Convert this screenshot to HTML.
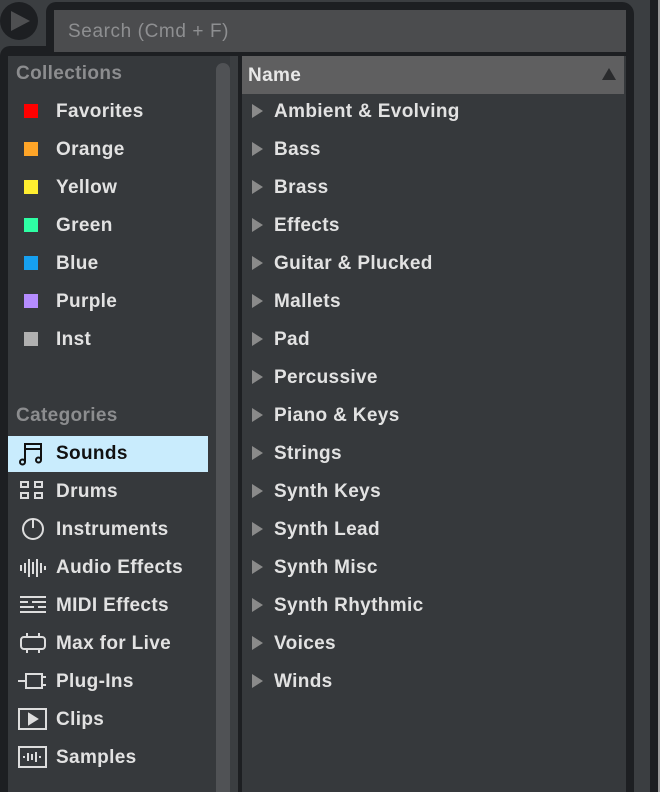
<!DOCTYPE html>
<html><head><style>
*{margin:0;padding:0;box-sizing:border-box}
body{width:660px;height:792px;background:#3b3e41;position:relative;overflow:hidden;font-family:"Liberation Sans",sans-serif;font-weight:bold;font-size:19px;letter-spacing:0.35px;color:#e2e2e2}
.a{position:absolute}
.t{position:absolute;line-height:22px;white-space:nowrap}
.sq{position:absolute;width:14px;height:14px;left:24px}
.tri{position:absolute;left:252px;width:0;height:0;border-left:11px solid #8a8a8a;border-top:7px solid transparent;border-bottom:7px solid transparent}
svg{position:absolute}
</style></head><body>
<div class="a" style="left:46px;top:2px;width:588px;height:60px;background:#1d1f22;border-radius:10px 12px 0 0"></div>
<div class="a" style="left:0;top:46px;width:634px;height:746px;background:#1d1f22;border-radius:10px 0 0 0"></div>
<div class="a" style="left:54px;top:10px;width:572px;height:42px;background:#4b4c4e"></div>
<div class="t" style="left:68px;top:21px;color:#8e8f91;font-weight:normal;font-size:19px;letter-spacing:0.6px">Search (Cmd + F)</div>
<div class="a" style="left:0;top:2px;width:38px;height:38px;border-radius:50%;background:#1d1f22"></div>
<div class="a" style="left:11px;top:11px;width:0;height:0;border-left:19px solid #4e4f51;border-top:10px solid transparent;border-bottom:10px solid transparent"></div>
<div class="a" style="left:8px;top:56px;width:230px;height:736px;background:#36393c"></div>
<div class="a" style="left:216px;top:63px;width:14px;height:729px;background:#505255;border-radius:7px 7px 0 0"></div>
<div class="a" style="left:230px;top:56px;width:8px;height:736px;background:#3b3e41"></div>
<div class="a" style="left:242px;top:56px;width:384px;height:736px;background:#36393c"></div>
<div class="a" style="left:242px;top:56px;width:382px;height:38px;background:#5f5f60"></div>
<div class="t" style="left:248px;top:65px;color:#e8e8e8">Name</div>
<div class="a" style="left:602px;top:68px;width:0;height:0;border-bottom:12px solid #2a2b2d;border-left:7px solid transparent;border-right:7px solid transparent"></div>
<div class="a" style="left:634px;top:0;width:16px;height:792px;background:#3b3e41"></div>
<div class="a" style="left:650px;top:0;width:8px;height:792px;background:#1d1f22"></div>
<div class="a" style="left:658px;top:0;width:2px;height:792px;background:#9a9a9a"></div>

<div class="t" style="left:16px;top:63px;color:#8c8d8f">Collections</div>
<div class="sq" style="top:104px;background:#ff0000"></div><div class="t" style="left:56px;top:101px">Favorites</div>
<div class="sq" style="top:142px;background:#ffa528"></div><div class="t" style="left:56px;top:139px">Orange</div>
<div class="sq" style="top:180px;background:#ffee30"></div><div class="t" style="left:56px;top:177px">Yellow</div>
<div class="sq" style="top:218px;background:#2effa4"></div><div class="t" style="left:56px;top:215px">Green</div>
<div class="sq" style="top:256px;background:#16a0f0"></div><div class="t" style="left:56px;top:253px">Blue</div>
<div class="sq" style="top:294px;background:#b58cff"></div><div class="t" style="left:56px;top:291px">Purple</div>
<div class="sq" style="top:332px;background:#b0b0b0"></div><div class="t" style="left:56px;top:329px">Inst</div>
<div class="t" style="left:16px;top:405px;color:#8c8d8f">Categories</div>

<div class="a" style="left:8px;top:436px;width:200px;height:36px;background:#c9ecfd"></div>
<svg style="left:18px;top:441px" width="28" height="26" viewBox="0 0 28 26" fill="none" stroke="#111" stroke-width="2"><path d="M7 21V3h16v16M7 8h16"/><circle cx="4.5" cy="21" r="2.5"/><circle cx="20.5" cy="19" r="2.5"/></svg>
<div class="t" style="left:56px;top:443px;color:#111">Sounds</div>

<svg style="left:18px;top:479px" width="30" height="26" viewBox="0 0 30 26" fill="none" stroke="#ddd" stroke-width="2"><rect x="3" y="3" width="7" height="5"/><rect x="17" y="3" width="7" height="5"/><rect x="3" y="14" width="7" height="5"/><rect x="17" y="14" width="7" height="5"/></svg>
<div class="t" style="left:56px;top:481px">Drums</div>
<svg style="left:18px;top:517px" width="30" height="26" viewBox="0 0 30 26" fill="none" stroke="#ddd" stroke-width="2"><circle cx="15" cy="12" r="10"/><path d="M15 2v9"/></svg>
<div class="t" style="left:56px;top:519px">Instruments</div>
<svg style="left:18px;top:555px" width="30" height="26" viewBox="0 0 30 26" fill="none" stroke="#ddd" stroke-width="2"><path d="M3 10v6M7 8v10M11 4v18M15 7v12M19 4v18M23 8v10M27 11v4"/></svg>
<div class="t" style="left:56px;top:557px">Audio Effects</div>
<svg style="left:18px;top:593px" width="30" height="26" viewBox="0 0 30 26" fill="none" stroke="#ddd" stroke-width="2"><path d="M2 4h26M2 9h8M14 9h14M2 14h14M20 14h8M2 19h26"/></svg>
<div class="t" style="left:56px;top:595px">MIDI Effects</div>
<svg style="left:18px;top:631px" width="30" height="26" viewBox="0 0 30 26" fill="none" stroke="#ddd" stroke-width="2"><rect x="3" y="6" width="24" height="12" rx="3"/><path d="M9 2v4M21 2v4M9 18v4M21 18v4"/></svg>
<div class="t" style="left:56px;top:633px">Max for Live</div>
<svg style="left:16px;top:669px" width="32" height="26" viewBox="0 0 32 26" fill="none" stroke="#ddd" stroke-width="2"><path d="M2 12h8M10 5h16v14H10zM26 8h4M26 16h4"/></svg>
<div class="t" style="left:56px;top:671px">Plug-Ins</div>
<svg style="left:16px;top:707px" width="32" height="26" viewBox="0 0 32 26" fill="none" stroke="#ddd" stroke-width="2"><rect x="3" y="2" width="27" height="20"/><path d="M13 7l8 5-8 5z" fill="#ddd"/></svg>
<div class="t" style="left:56px;top:709px">Clips</div>
<svg style="left:16px;top:745px" width="32" height="26" viewBox="0 0 32 26" fill="none" stroke="#ddd" stroke-width="2"><rect x="3" y="2" width="27" height="20"/><path d="M8 11v2M12 8v8M16 9v6M20 7v10M24 11v2"/></svg>
<div class="t" style="left:56px;top:747px">Samples</div>

<div class="tri" style="top:104px"></div><div class="t" style="left:274px;top:101px">Ambient &amp; Evolving</div>
<div class="tri" style="top:142px"></div><div class="t" style="left:274px;top:139px">Bass</div>
<div class="tri" style="top:180px"></div><div class="t" style="left:274px;top:177px">Brass</div>
<div class="tri" style="top:218px"></div><div class="t" style="left:274px;top:215px">Effects</div>
<div class="tri" style="top:256px"></div><div class="t" style="left:274px;top:253px">Guitar &amp; Plucked</div>
<div class="tri" style="top:294px"></div><div class="t" style="left:274px;top:291px">Mallets</div>
<div class="tri" style="top:332px"></div><div class="t" style="left:274px;top:329px">Pad</div>
<div class="tri" style="top:370px"></div><div class="t" style="left:274px;top:367px">Percussive</div>
<div class="tri" style="top:408px"></div><div class="t" style="left:274px;top:405px">Piano &amp; Keys</div>
<div class="tri" style="top:446px"></div><div class="t" style="left:274px;top:443px">Strings</div>
<div class="tri" style="top:484px"></div><div class="t" style="left:274px;top:481px">Synth Keys</div>
<div class="tri" style="top:522px"></div><div class="t" style="left:274px;top:519px">Synth Lead</div>
<div class="tri" style="top:560px"></div><div class="t" style="left:274px;top:557px">Synth Misc</div>
<div class="tri" style="top:598px"></div><div class="t" style="left:274px;top:595px">Synth Rhythmic</div>
<div class="tri" style="top:636px"></div><div class="t" style="left:274px;top:633px">Voices</div>
<div class="tri" style="top:674px"></div><div class="t" style="left:274px;top:671px">Winds</div>
</body></html>
